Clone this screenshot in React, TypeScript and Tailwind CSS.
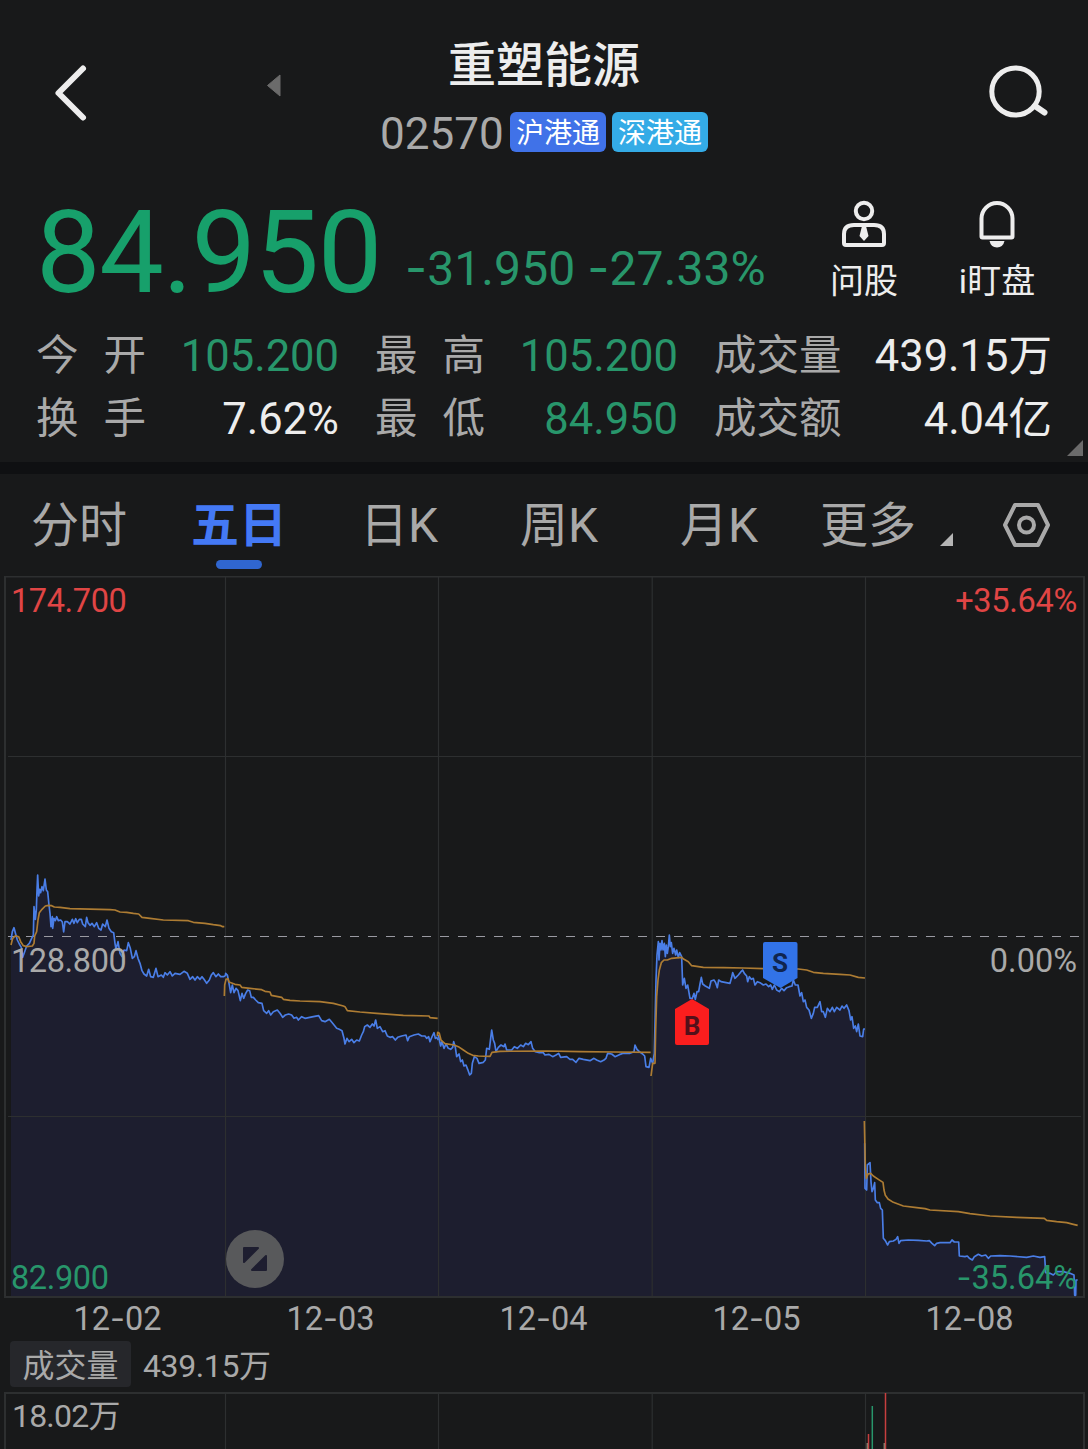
import clsx from "clsx";

type Tone = "down" | "plain";

interface Stat {
  label: string;
  value: string;
  tone: Tone;
}

interface Session {
  date: string;
  x: number;
  y: number;
  price: string;
  average: string;
}

const stats: Stat[][] = [
  [
    { label: "今开", value: "105.200", tone: "down" },
    { label: "最高", value: "105.200", tone: "down" },
    { label: "成交量", value: "439.15万", tone: "plain" },
  ],
  [
    { label: "换手", value: "7.62%", tone: "plain" },
    { label: "最低", value: "84.950", tone: "down" },
    { label: "成交额", value: "4.04亿", tone: "plain" },
  ],
];

const tabs = ["分时", "五日", "日K", "周K", "月K"];

// Traces are stored in thirds of a pixel, relative to the session's x / y.
const sessions: Session[] = [
  {
    date: "12-02",
    x: 0,
    y: 284,
    price:
      "33,240 37,215 42,203 47,222 52,240 58,252 64,262 68,292 74,275 80,258 88,250 95,235 100,225 102,140 106,178 109,150 111,90 113,45 116,108 119,88 122,98 126,80 130,92 135,57 139,90 143,95 147,135 150,160 153,200 157,170 158,205 162,175 166,182 170,170 175,182 182,180 187,186 191,216 195,185 202,185 210,192 217,178 222,190 227,176 232,188 238,178 244,178 248,192 256,200 260,172 264,188 270,196 276,190 283,200 290,188 296,205 303,210 308,192 316,200 321,180 327,205 334,215 341,218 345,250 348,268 354,245 360,280 366,290 372,270 380,272 385,248 391,265 397,295 403,290 408,272 414,295 420,310 426,332 432,342 440,348 446,328 452,350 460,352 468,325 474,350 484,345 490,352 495,338 502,345 510,335 517,348 525,340 540,343 552,334 562,340 570,358 578,350 585,360 592,350 600,358 606,350 612,358 620,370 628,360 634,345 640,338 648,350 655,342 662,350 670,350 676,348",
    average:
      "33,255 38,235 47,227 56,230 62,245 70,257 80,260 97,258 102,250 104,228 110,215 114,180 118,158 126,148 136,138 145,136 155,137 163,141 180,142 210,146 330,149 345,150 360,156 380,157 400,160 416,162 426,172 450,175 490,180 565,182 580,187 615,190 640,194 662,197 668,200 673,200",
  },
  {
    date: "12-03",
    x: 210,
    y: 384,
    price:
      "46,48 47,40 52,45 58,75 62,98 67,75 72,98 78,85 84,92 91,122 96,100 101,115 107,100 113,90 119,92 124,112 130,112 137,120 145,128 156,130 161,152 170,160 176,152 182,165 190,155 202,150 210,160 218,172 226,165 236,162 245,165 252,175 260,172 265,180 275,170 285,175 310,170 326,167 335,182 345,185 358,178 368,190 380,205 388,208 396,212 402,235 405,252 411,235 417,245 425,238 432,248 440,240 448,243 455,225 460,215 464,200 472,195 480,202 487,192 492,198 497,180 502,205 510,200 518,215 525,212 532,228 540,232 548,230 556,240 563,232 575,228 588,225 593,242 598,230 612,225 625,222 635,228 645,228 650,235 656,230 660,245 667,228 672,218 676,235 680,232 685,240",
    average:
      "43,108 44,75 48,58 54,56 57,66 65,69 75,73 90,75 95,82 120,85 155,89 165,94 180,96 184,106 215,112 220,118 240,121 270,123 330,125 370,130 400,138 405,140 412,152 450,156 500,160 580,166 657,168 660,173 683,175",
  },
  {
    date: "12-04",
    x: 430,
    y: 344,
    price:
      "25,345 32,378 36,365 42,385 48,372 55,385 62,388 68,382 71,365 76,382 80,410 87,402 92,425 97,420 102,438 108,435 113,448 119,465 124,460 127,430 133,410 141,415 147,430 160,427 166,420 170,385 178,388 182,355 185,330 190,360 194,370 198,395 205,382 213,375 222,380 225,372 230,390 245,390 253,380 262,385 272,375 280,380 287,370 295,374 303,365 308,385 316,395 328,398 340,398 345,405 357,403 368,410 378,405 386,400 392,412 410,410 420,418 428,418 438,427 447,415 460,418 480,422 492,415 500,420 512,425 522,420 528,415 533,400 545,402 555,410 568,404 580,400 600,400 612,395 615,375 621,388 628,395 638,402 644,408 648,440 657,442 662,415 668,430",
    average:
      "22,348 23,337 28,340 33,360 45,371 72,375 85,380 100,390 115,400 128,406 145,408 180,409 186,397 210,394 350,393 450,395 550,396 662,397",
  },
  {
    date: "12-05",
    x: 640,
    y: 344,
    price:
      "38,430 43,400 48,180 51,105 55,65 57,120 60,70 63,90 66,62 69,90 73,70 76,110 79,75 82,100 85,80 88,45 91,80 94,68 98,100 102,85 107,105 110,90 115,112 119,98 125,110 128,195 133,175 138,205 143,195 150,235 157,235 162,220 166,238 171,215 176,215 180,192 184,172 188,192 196,198 208,205 213,183 222,180 227,188 232,203 236,180 243,185 270,190 275,172 278,158 285,175 295,165 303,155 308,150 313,160 320,168 323,185 328,170 334,178 340,175 345,195 352,185 360,188 370,195 378,192 386,200 392,195 397,208 403,195 410,210 418,215 425,205 432,212 440,203 448,200 456,198 460,180 466,195 474,195 480,228 485,218 490,245 495,240 500,262 507,270 514,295 520,280 524,262 532,262 540,245 545,275 550,275 556,292 562,265 570,275 577,262 583,275 590,262 600,270 606,258 612,265 620,255 627,272 632,300 636,290 641,325 646,318 650,335 655,312 660,348 668,350 671,327 675,327",
    average:
      "33,468 38,430 45,430 47,330 50,230 54,180 58,150 64,128 72,120 82,120 95,115 125,112 132,118 145,125 155,137 190,142 250,143 310,144 370,146 475,147 500,150 520,157 550,160 600,163 630,165 655,172 675,174",
  },
  {
    date: "12-08",
    x: 850,
    y: 524,
    price:
      "44,130 45,265 50,270 52,195 60,188 63,245 66,275 70,265 74,248 76,300 82,308 88,308 92,325 97,330 100,415 106,422 113,435 118,425 130,423 138,418 143,410 147,430 152,422 175,420 205,421 230,423 238,422 246,430 254,437 260,430 270,428 290,428 300,428 306,420 313,426 326,426 328,468 345,470 352,468 358,475 367,480 373,470 385,463 395,468 407,465 415,475 422,468 450,467 480,468 530,472 550,468 570,472 584,470 587,518 600,520 610,525 620,515 640,515 660,520 672,525 674,586 677,586 678,540 683,540",
    average:
      "43,63 46,200 49,235 54,222 62,220 70,228 85,238 99,247 102,270 106,286 114,297 130,307 160,318 200,323 225,326 240,330 325,335 360,341 420,348 500,352 583,355 590,361 620,365 650,368 670,373 683,376",
  },
];

const dividers = [225.5, 438.5, 652.2, 865.5];
const CHART_BOTTOM = 720;

function areaPoints({ y, price }: Session) {
  const points = price.split(" ");
  const firstX = points[0].split(",")[0];
  const lastX = points[points.length - 1].split(",")[0];
  const base = (CHART_BOTTOM - y) * 3;
  return `${firstX},${base} ${price} ${lastX},${base}`;
}

function Header() {
  return (
    <header className="flex h-[172px] justify-between">
      <div className="flex w-[380px] items-start justify-between pr-[98px] pl-[54px]">
        <svg className="mt-[63px] h-[60px] w-[36px]" viewBox="0 0 36 60" fill="none">
          <path
            d="M29 5.500L4.500 30L29 54.500"
            stroke="#ededed"
            strokeWidth="6"
            strokeLinecap="round"
            strokeLinejoin="round"
          />
        </svg>
        <svg className="mt-[73px] h-[25px] w-[16px]" viewBox="0 0 16 25">
          <path d="M14 2V23L1.500 12.500Z" fill="#6b6b6b" stroke="#6b6b6b" strokeLinejoin="round" />
        </svg>
      </div>

      <div className="flex flex-col items-center pt-9">
        <h1 className="text-[48px] leading-[60px] font-medium text-[#ededed]">重塑能源</h1>
        <div className="mt-4 flex h-10 items-center">
          <span className="w-[130px] pt-[3px] text-[44px] leading-[40px] text-[#a9a9a9]">02570</span>
          <span className="flex h-10 w-24 items-center justify-center rounded-md bg-[#4072e8] pt-[3px] text-[28px] leading-none text-white">
            沪港通
          </span>
          <span className="ml-1.5 flex h-10 w-24 items-center justify-center rounded-md bg-[#34abe6] pt-[3px] text-[28px] leading-none text-white">
            深港通
          </span>
        </div>
      </div>

      <div className="flex w-[380px] justify-end pr-[38px]">
        <svg className="mt-[63px] h-[60px] w-[64px]" viewBox="0 0 64 60" fill="none" stroke="#ededed">
          <ellipse cx="29.500" cy="28.500" rx="23.700" ry="23.500" strokeWidth="5" />
          <path d="M49 43L58.500 49.500" strokeWidth="6" strokeLinecap="round" />
        </svg>
      </div>
    </header>
  );
}

function Signed({ value }: { value: string }) {
  return (
    <span>
      <span className="font-['Inter']">-</span>
      {value}
    </span>
  );
}

function PriceRow() {
  return (
    <section className="flex h-[152px] items-start">
      <div className="w-[405px] pt-[23px] pl-[36px] text-[115px] leading-[115px] tracking-[-1.4px] text-[#17a06b]">
        84.950
      </div>
      <div className="flex w-[401px] gap-3 pt-[72px] text-[48px] leading-[47px] tracking-[0.1px] text-[#28966b]">
        <Signed value="31.950" />
        <Signed value="27.33%" />
      </div>

      <div className="flex w-[116px] flex-col items-center pt-7 text-[34px] text-[#ededed]">
        <svg className="h-[48px] w-[46px]" viewBox="0 0 46 48" fill="none" stroke="#ededed" strokeWidth="4">
          <circle cx="23" cy="11" r="8.200" />
          <path
            d="M3 43V34Q3 25 13 25H33Q43 25 43 34V43Q43 45 41 45H5Q3 45 3 43Z"
            strokeLinejoin="round"
          />
          <path d="M21 26H25L27.500 36L23 41L18.500 36Z" fill="#ededed" stroke="none" />
        </svg>
        <span className="mt-2.5 leading-[46px]">问股</span>
      </div>
      <div className="flex w-[150px] flex-col items-center pt-7 text-[34px] text-[#ededed]">
        <svg className="h-[48px] w-[40px]" viewBox="0 0 40 48" fill="none">
          <path
            d="M4.500 36.500V18.500A15.500 15.500 0 0 1 35.500 18.500V36.500Q35.500 37.500 34.500 37.500H5.500Q4.500 37.500 4.500 36.500Z"
            stroke="#ededed"
            strokeWidth="4"
          />
          <path d="M12.500 41H27.500Q26 47.500 20 47.500Q14 47.500 12.500 41Z" fill="#ededed" />
        </svg>
        <span className="mt-2.5 leading-[46px]">i盯盘</span>
      </div>
    </section>
  );
}

function StatsGrid() {
  return (
    <section className="relative h-[138px] pt-px">
      {stats.map((row) => (
        <div key={row[0].label} className="flex h-[63px] gap-9 pl-9 text-[43.5px] leading-[63px]">
          {row.map(({ label, value, tone }, i) => (
            <div key={label} className={clsx("flex justify-between", i === 2 ? "w-[338px]" : "w-[303px]")}>
              <span
                className={clsx(
                  "-mt-px text-[42.5px] text-[#a9a9a9]",
                  label.length === 2 && "tracking-[25px]"
                )}
              >
                {label}
              </span>
              <span
                className={clsx(
                  "whitespace-nowrap",
                  label.length === 2 && "-ml-10",
                  tone === "down" ? "text-[#28966b]" : "text-[#ededed]"
                )}
              >
                {value}
              </span>
            </div>
          ))}
        </div>
      ))}
      <svg className="absolute right-[5px] bottom-[6px] h-4 w-4" viewBox="0 0 16 16">
        <path d="M16 0V16H0Z" fill="#6b6b6b" />
      </svg>
    </section>
  );
}

function Tabs() {
  return (
    <nav className="flex h-[102px] items-start text-[48px] text-[#a9a9a9]">
      {tabs.map((tab) => {
        const active = tab === "五日";
        return (
          <div
            key={tab}
            className={clsx("flex w-40 flex-col items-center pt-5 pr-0.5", active && "font-bold text-[#4479f5]")}
          >
            <span className="leading-[64px]">{tab}</span>
            {active && <span className="mt-0.5 h-[9px] w-[46px] rounded-full bg-[#3066cf]" />}
          </div>
        );
      })}
      <div className="flex w-[202px] items-end pt-5 pl-5">
        <span className="leading-[64px]">更多</span>
        <svg className="mb-3 ml-6 h-[13px] w-[13px]" viewBox="0 0 13 13">
          <path d="M13 0V13H0Z" fill="#b5b5b5" />
        </svg>
      </div>
      <svg className="mt-[28px] h-[46px] w-[50px]" viewBox="0 0 50 46" fill="none" stroke="#a9a9a9" strokeWidth="4">
        <path d="M13 3H36L46 23L36 43H13L3 23Z" strokeLinejoin="round" />
        <circle cx="24.500" cy="23" r="7.500" />
      </svg>
    </nav>
  );
}

function PriceChart() {
  return (
    <svg className="block h-[723px] w-full" viewBox="0 0 1088 723" fontSize="32.5">
      {sessions.map((session) => (
        <polygon
          key={session.date}
          points={areaPoints(session)}
          transform={`translate(${session.x} ${session.y}) scale(0.33333)`}
          fill="#1d1e2f"
        />
      ))}

      {/* grid */}
      <g stroke="#2d2f30" fill="none">
        <rect x="5" y="0.500" width="1079" height="720.500" strokeWidth="2" />
        {dividers.map((x) => (
          <path key={x} d={`M${x} 1V720`} strokeWidth="1.200" />
        ))}
        <path d="M8 180.500H1081M8 540.500H1081" strokeWidth="1.200" />
      </g>
      <path d="M8 360.500H1081" stroke="#9a9aa2" strokeWidth="1.200" strokeDasharray="9 9" />

      {sessions.map(({ date, x, y, price, average }) => (
        <g
          key={date}
          transform={`translate(${x} ${y}) scale(0.33333)`}
          fill="none"
          strokeWidth="5"
          strokeLinejoin="round"
        >
          <polyline points={price} stroke="#4a7ee6" />
          <polyline points={average} stroke="#ad7c33" />
        </g>
      ))}

      {/* trade markers */}
      <g fontSize="26" fontWeight="700" textAnchor="middle">
        <path d="M765 366H795.500Q797.500 366 797.500 368V402L780.500 412L763 402V368Q763 366 765 366Z" fill="#3273e8" />
        <text x="780" y="396" fill="#10254f">
          S
        </text>
        <path d="M692 423L709 433V467Q709 469 707 469H677Q675 469 675 467V433Z" fill="#fa1e1e" />
        <text x="692" y="458.500" fill="#52101a">
          B
        </text>
      </g>

      {/* axis labels */}
      <g fill="#e04545">
        <text x="11" y="36" letterSpacing="-0.4">
          174.700
        </text>
        <text x="1077" y="36" textAnchor="end" letterSpacing="-0.3">
          +35.64%
        </text>
      </g>
      <g fill="#a9a9a9">
        <text x="11" y="396" letterSpacing="-0.4">
          128.800
        </text>
        <text x="1077" y="396" textAnchor="end">
          0.00%
        </text>
      </g>
      <g fill="#28966b">
        <text x="11" y="713" letterSpacing="-0.4">
          82.900
        </text>
        <text x="1077" y="713" textAnchor="end">
          <tspan fontFamily="Inter">-</tspan>35.64%
        </text>
      </g>

      {/* expand button */}
      <circle cx="255" cy="683" r="29" fill="#58595b" />
      <path
        d="M244 672H258L244 686ZM266 680V694H252Z"
        fill="#1e1e30"
        stroke="#1e1e30"
        strokeWidth="2"
        strokeLinejoin="round"
      />
    </svg>
  );
}

function DateAxis() {
  return (
    <div className="flex h-[42px] pl-[11px] text-[32.5px] leading-[40px] text-[#a9a9a9]">
      {sessions.map(({ date }) => {
        const [month, day] = date.split("-");
        return (
          <span key={date} className="w-[213px] text-center">
            {month}
            <span className="font-['Inter']">-</span>
            {day}
          </span>
        );
      })}
    </div>
  );
}

function VolumePanel() {
  return (
    <section>
      <div className="flex h-[51px] items-start pl-[10px] text-[32px] text-[#a9a9a9]">
        <span className="h-[46px] w-[121px] rounded bg-[#26272b] text-center leading-[51px]">成交量</span>
        <span className="pl-3 leading-[51px] tracking-[-0.4px]">439.15万</span>
      </div>
      <svg className="block h-[57px] w-full" viewBox="0 0 1088 57" fontSize="32">
        <g stroke="#2d2f30" fill="none">
          <rect x="5" y="1" width="1079" height="80" strokeWidth="2" />
          {dividers.map((x) => (
            <path key={x} d={`M${x} 1V57`} strokeWidth="1.200" />
          ))}
        </g>
        <text x="12" y="35" fill="#a9a9a9" letterSpacing="-0.8">
          18.02万
        </text>
        <g strokeWidth="1.500">
          <path d="M885.500 1V57M868.500 42V57" stroke="#c63f3f" />
          <path d="M872.300 14V57" stroke="#28966b" />
          <path d="M867.300 51V57M884.300 51V57" stroke="#8a7a6a" />
        </g>
      </svg>
    </section>
  );
}

export default function App() {
  return (
    <main className="h-[1449px] w-[1088px] overflow-hidden bg-[#18191a] font-['Roboto','Noto_Sans_CJK_SC',sans-serif]">
      <Header />
      <PriceRow />
      <StatsGrid />
      <div className="h-3 bg-[#0f1012]" />
      <Tabs />
      <PriceChart />
      <DateAxis />
      <VolumePanel />
    </main>
  );
}
